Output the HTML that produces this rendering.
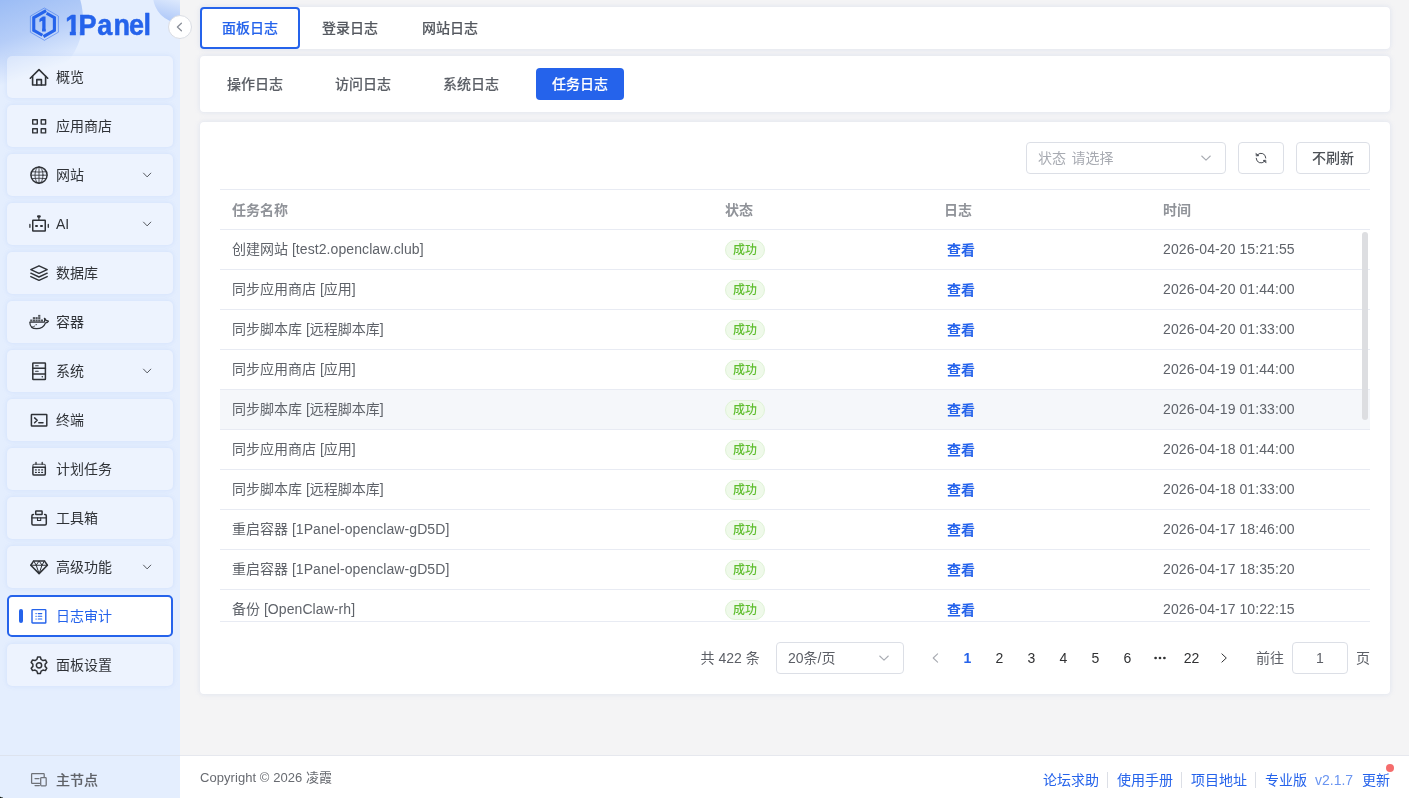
<!DOCTYPE html>
<html lang="zh-CN">
<head>
<meta charset="utf-8">
<title>1Panel</title>
<style>
*{box-sizing:border-box;margin:0;padding:0}
html,body{width:1409px;height:798px;overflow:hidden}
body{font-family:"Liberation Sans","Noto Sans CJK SC",sans-serif;font-size:14px;color:#606266;background:#f4f4f5;position:relative}
i{font-style:normal}
#wrap{position:absolute;left:0;top:0;width:1409px;height:798px;will-change:transform;transform:translateZ(0)}
/* sidebar */
#side{position:absolute;left:0;top:0;width:180px;height:798px;background:#e4eefe;overflow:hidden}
#side .blob1{position:absolute;left:-53px;top:-49px;width:136px;height:136px;border-radius:50%;background:linear-gradient(161deg,#6397ee 0%,#9bbcf5 36.7%,#b5cdf8 60%,#e4eefe 84%)}
#side .blob2{position:absolute;left:152.5px;top:-32.5px;width:55px;height:55px;border-radius:50%;background:linear-gradient(195deg,#e4eefe 52%,#a3c0f7 100%)}
.mi{position:absolute;left:7px;width:166px;height:42px;border-radius:5px;background:rgba(255,255,255,.33);color:#2f3237;font-size:14px;line-height:42px;box-shadow:0 0 4px rgba(190,210,250,.55)}
.mi .ic{position:absolute;left:22px;top:11px;width:20px;height:20px}
.mi .tx{position:absolute;left:49px;top:0;white-space:nowrap}
.mi .ar{position:absolute;left:134px;top:16px;width:12px;height:10px}
.mi.act{background:#fff;border:2px solid #2563eb;color:#2563eb;box-shadow:none}
.mi.act .ic{left:20px;top:9px}
.mi.act .tx{left:47px;top:-2px}
.mi.act .bar{position:absolute;left:10px;top:12px;width:4px;height:14px;border-radius:2px;background:#2563eb}
.sline{position:absolute;left:0;top:755px;width:180px;height:1px;background:#dde3ee}
.node{position:absolute;left:7px;top:759px;width:166px;height:42px;line-height:42px;color:#5f6268;font-weight:500;-webkit-text-stroke:.12px currentColor}
.node .ic{position:absolute;left:22px;top:11px;width:20px;height:20px}
.node .tx{position:absolute;left:49px;top:0;white-space:nowrap}
#collapse{position:absolute;left:168px;top:15px;width:24px;height:24px;border-radius:50%;background:#fff;border:1px solid #d9dce3}
/* cards */
.card{position:absolute;left:200px;width:1190px;background:#fff;border-radius:4px;box-shadow:0 0 5px rgba(185,198,228,.42)}
.tab1{position:absolute;top:0;height:42px;line-height:42px;font-size:14px;color:#54585f;white-space:nowrap;text-align:center;font-weight:500;-webkit-text-stroke:.13px currentColor}
.tab1.on{color:#2563eb;border:2px solid #2563eb;border-radius:4px;line-height:38px}
.tab2{position:absolute;top:12px;width:88px;height:32px;line-height:32px;font-size:14px;color:#5b5f66;font-weight:500;white-space:nowrap;text-align:center;border-radius:4px;-webkit-text-stroke:.13px currentColor}
.tab2.on{background:#2563eb;color:#fff}
.sel{position:absolute;height:32px;border:1px solid #dcdfe6;border-radius:4px;background:#fff;line-height:30px;padding-left:11px;font-size:14px;white-space:nowrap}
.sel .sc{position:absolute;right:12.8px;top:10px;width:12px;height:10px}
.btn{position:absolute;height:32px;border:1px solid #dcdfe6;border-radius:4px;background:#fff;line-height:30px;text-align:center;font-size:14px;font-weight:500;color:#4d5157;white-space:nowrap}
/* table */
.hl{position:absolute;left:220px;width:1150px;height:1px;background:#e8ebf3}
.th{position:absolute;top:200px;font-size:14px;line-height:20px;color:#909399;font-weight:bold;white-space:nowrap}
#tb{position:absolute;left:220px;top:230px;width:1150px;height:391px;overflow:hidden}
.rl{position:absolute;left:0;width:1150px;height:1px;background:#e8ebf3}
.hov{position:absolute;left:0;width:1150px;height:39px;background:#f5f7fa}
.td{position:absolute;font-size:14px;line-height:20px;color:#5f636a;white-space:nowrap}
.tag{position:absolute;left:505px;width:40px;height:20px;border-radius:10px;background:#eff9ea;border:1px solid #e0f3d7;color:#5fbe2e;font-size:12px;line-height:18px;text-align:center;font-weight:500}
.lk{position:absolute;left:727px;font-size:14px;line-height:20px;color:#2563eb;font-weight:bold;white-space:nowrap}
.thumb{position:absolute;left:1142px;top:2px;width:6px;height:188px;border-radius:3px;background:#dddee1}
.pt{position:absolute;top:648px;font-size:14px;line-height:20px;color:#5c5f66;white-space:nowrap}
.pg{position:absolute;top:648px;width:32px;text-align:center;font-size:14px;line-height:20px;color:#303133;white-space:nowrap}
.pg.on{color:#2563eb;font-weight:bold}
#foot{position:absolute;left:180px;top:755px;width:1229px;height:43px;background:#fff;border-top:1px solid #e6e8ee}
.cp{position:absolute;left:200px;top:769px;font-size:13px;line-height:18px;color:#686b71;white-space:nowrap;letter-spacing:.06px}
.ft{position:absolute;top:770px;font-size:14px;line-height:20px;color:#2563eb;white-space:nowrap}
.sep{position:absolute;top:772px;width:1px;height:16px;background:#dcdfe6}
.dot{position:absolute;left:1386px;top:764px;width:8px;height:8px;border-radius:50%;background:#f56c6c}
.cnr{position:absolute;bottom:0;width:6px;height:6px}
.cnr.l{left:-3px;background:radial-gradient(circle at 100% 0,transparent 5px,#0a140a 6px)}
.l{letter-spacing:.09px}
</style>
</head>
<body>
<div id="wrap">
<div id="side">
<div class="blob1"></div><div class="blob2"></div>
<svg class="logo" width="150" height="50" viewBox="0 0 150 50" style="position:absolute;left:0;top:0">
<path d="M44.4 8 L58.4 16.1 V32.2 L44.4 40.3 L30.4 32.2 V16.1 Z" fill="none" stroke="#2563eb" stroke-width="0.55" opacity=".85"/>
<path d="M46.1 10.6 L33.75 17.75 V30.25 L42.4 35.25" fill="none" stroke="#2563eb" stroke-width="3.1" stroke-linejoin="miter"/>
<path d="M46.6 13.25 L54.4 17.75 V30.25 L43.5 36.55" fill="none" stroke="#2563eb" stroke-width="3.1" stroke-linejoin="miter"/>
<defs><clipPath id="c0"><path d="M40 0 H70 V28 H53.8 V40 H49.5 V28 H40 Z"/></clipPath></defs>
<g transform="scale(0.85 1)"><text x="45.47" y="31" font-family="Liberation Sans, sans-serif" font-weight="bold" font-size="20.2" fill="#2563eb" stroke="#2563eb" stroke-width="0.9" stroke-linejoin="miter" clip-path="url(#c0)">1</text></g>
<defs><clipPath id="c1"><path d="M60 0 H200 V50 H88.7 V31 H84.3 V50 H77.6 V31 H60 Z"/></clipPath></defs>
<g transform="scale(0.9 1)"><text x="72.44 87.3 108 126.08 143.33 159.44" y="35" font-family="Liberation Sans, sans-serif" font-weight="bold" font-size="30" fill="#2563eb" stroke="#2563eb" stroke-width="0.55" stroke-linejoin="round" clip-path="url(#c1)">1Panel</text></g>
</svg>
<div class="mi" style="top:56px"><svg class="ic" viewBox="0 0 20 20" fill="none" stroke="#2f3237" stroke-width="1.6" stroke-linecap="round" stroke-linejoin="round" ><path d="M1.3 11.2 L10 2.6 L18.7 11.2"/><path d="M3.6 9.4 V18 H16.6 V9.4"/><path d="M7.8 18 V12.6 H12.4 V18"/></svg><span class="tx">概览</span></div>
<div class="mi" style="top:105px"><svg class="ic" viewBox="0 0 20 20" fill="none" stroke="#2f3237" stroke-width="1.4" stroke-linecap="round" stroke-linejoin="round" ><rect x="3.7" y="3.7" width="4.6" height="4.4"/><rect x="12.2" y="3.7" width="4.4" height="4.4"/><rect x="3.7" y="12.7" width="4.6" height="4.2"/><rect x="12.2" y="12.7" width="4.4" height="4.2"/></svg><span class="tx">应用商店</span></div>
<div class="mi" style="top:154px"><svg class="ic" viewBox="0 0 20 20" fill="none" stroke="#2f3237" stroke-width="0.85" stroke-linecap="round" stroke-linejoin="round" ><circle cx="10" cy="10.1" r="8.1" stroke-width="1.45"/><ellipse cx="10" cy="10.1" rx="4" ry="8.1"/><path d="M10 2 V18.2 M1.9 10.2 H18.1 M2.8 6.7 Q10 7.5 17.2 6.7 M2.8 13.6 Q10 12.8 17.2 13.6"/></svg><span class="tx">网站</span><svg class="ar" viewBox="0 0 12 10" fill="none" stroke="#4d5056" stroke-width="0.95" stroke-linecap="round" stroke-linejoin="round"><path d="M2.5 3.1 L6.15 6.9 L9.8 3.1"/></svg></div>
<div class="mi" style="top:203px"><svg class="ic" viewBox="0 0 20 20" fill="none" stroke="#2f3237" stroke-width="1.5" stroke-linecap="round" stroke-linejoin="round" ><rect x="3.75" y="6.35" width="12.5" height="10.7" rx="0.3"/><path d="M9.9 6.2 V3.4" stroke-width="1.2"/><rect x="8" y="1.2" width="3.8" height="2.5" rx="1.1" fill="#2f3237" stroke="none"/><path d="M0.9 10.5 V13.3 M19.3 10.5 V13.3" stroke-width="1.3"/><rect x="6.2" y="11" width="2.6" height="1.9" rx="0.3" fill="#2f3237" stroke="none"/><rect x="11.2" y="11" width="2.6" height="1.9" rx="0.3" fill="#2f3237" stroke="none"/></svg><span class="tx">AI</span><svg class="ar" viewBox="0 0 12 10" fill="none" stroke="#4d5056" stroke-width="0.95" stroke-linecap="round" stroke-linejoin="round"><path d="M2.5 3.1 L6.15 6.9 L9.8 3.1"/></svg></div>
<div class="mi" style="top:252px"><svg class="ic" viewBox="0 0 20 20" fill="none" stroke="#2f3237" stroke-width="1.4" stroke-linecap="round" stroke-linejoin="round" ><path d="M10 2.8 L18.2 6.6 L10 10.4 L1.8 6.6 Z"/><path d="M1.8 10.2 L10 14 L18.2 10.2"/><path d="M1.8 13.6 L10 17.4 L18.2 13.6"/></svg><span class="tx">数据库</span></div>
<div class="mi" style="top:301px"><svg class="ic" viewBox="0 0 20 20" fill="none" stroke="#2f3237" stroke-width="1.2" stroke-linecap="round" stroke-linejoin="round" ><path d="M0.8 10.2 H15.2 C15.7 9 15.9 7.7 15.4 6.4 C16.6 6.9 17 7.8 17.1 8.7 C18 8.5 18.9 8.6 19.5 9.1 C18.9 10.3 17.6 10.8 16.6 10.8 C15.2 14.4 12.4 16.7 7.6 16.7 C3.2 16.7 0.9 14 0.8 10.2 Z"/><g fill="#2f3237" stroke="none" opacity=".82"><rect x="1.20" y="7.5" width="2.2" height="2"/><rect x="3.85" y="7.5" width="2.2" height="2"/><rect x="6.50" y="7.5" width="2.2" height="2"/><rect x="9.15" y="7.5" width="2.2" height="2"/><rect x="11.80" y="7.5" width="2.2" height="2"/><rect x="3.85" y="5.1" width="2.2" height="2"/><rect x="6.50" y="5.1" width="2.2" height="2"/><rect x="9.15" y="5.1" width="2.2" height="2"/><rect x="9.15" y="2.9" width="2.2" height="1.9"/></g><circle cx="7.2" cy="12.6" r="0.7" fill="#2f3237" stroke="none"/><path d="M3 14.9 C4 15 5 14.6 5.8 14" stroke-width="0.9"/></svg><span class="tx">容器</span></div>
<div class="mi" style="top:350px"><svg class="ic" viewBox="0 0 20 20" fill="none" stroke="#2f3237" stroke-width="1.5" stroke-linecap="round" stroke-linejoin="round" ><rect x="3.8" y="1.9" width="12.6" height="16.6" rx="0.5"/><path d="M3.8 7.2 H16.4 M3.8 12.9 H16.4"/><path d="M6.6 4.7 H9.2 M6.6 10.2 H9.2" stroke-width="1.1"/><circle cx="13.3" cy="15.7" r="0.8" fill="#2f3237" stroke="none"/></svg><span class="tx">系统</span><svg class="ar" viewBox="0 0 12 10" fill="none" stroke="#4d5056" stroke-width="0.95" stroke-linecap="round" stroke-linejoin="round"><path d="M2.5 3.1 L6.15 6.9 L9.8 3.1"/></svg></div>
<div class="mi" style="top:399px"><svg class="ic" viewBox="0 0 20 20" fill="none" stroke="#2f3237" stroke-width="1.5" stroke-linecap="round" stroke-linejoin="round" ><rect x="2.4" y="4.5" width="15.4" height="11.6" rx="0.5"/><path d="M5.6 7.9 L8.2 10.3 L5.6 12.7"/><path d="M9.8 12.7 H14"/></svg><span class="tx">终端</span></div>
<div class="mi" style="top:448px"><svg class="ic" viewBox="0 0 20 20" fill="none" stroke="#2f3237" stroke-width="1.5" stroke-linecap="round" stroke-linejoin="round" ><path d="M3.9 8.3 V14.9 Q3.9 16.1 5.1 16.1 H15.1 Q16.3 16.1 16.3 14.9 V8.3 Z"/><path d="M3.9 8.3 V6.4 Q3.9 5.2 5.1 5.2 H15.1 Q16.3 5.2 16.3 6.4 V8.3" stroke-width="1.1" opacity=".85"/><path d="M7 3.5 V5.2 M13.2 3.5 V5.2" stroke-width="1.3"/><path d="M6.5 10.9 H7.3 M9.6 10.9 H10.4 M12.7 10.9 H13.5 M6.5 13.4 H7.3 M9.6 13.4 H10.4 M12.7 13.4 H13.5" stroke-width="1.25"/></svg><span class="tx">计划任务</span></div>
<div class="mi" style="top:497px"><svg class="ic" viewBox="0 0 20 20" fill="none" stroke="#2f3237" stroke-width="1.5" stroke-linecap="round" stroke-linejoin="round" ><path d="M4.5 6.6 H4.1 Q2.9 6.6 2.9 7.8 V15.7 Q2.9 16.9 4.1 16.9 H16.1 Q17.3 16.9 17.3 15.7 V7.8 Q17.3 6.6 16.1 6.6 H15.6"/><rect x="6.7" y="3.1" width="6.4" height="3.5" rx="0.5"/><path d="M2.9 9.8 H17.3" stroke-width="1.3"/><path d="M8.5 9.8 V12.5 H11.7 V9.8" stroke-width="1.1"/></svg><span class="tx">工具箱</span></div>
<div class="mi" style="top:546px"><svg class="ic" viewBox="0 0 20 20" fill="none" stroke="#2f3237" stroke-width="1.55" stroke-linecap="round" stroke-linejoin="round" ><path d="M4.7 3.9 H15.4 L18.4 8.2 L10.1 16.6 L1.8 8.2 Z"/><path d="M1.8 8.2 H18.4" stroke-width="1.1"/><path d="M4.7 3.9 L7.2 8.2 L10.1 16.6 L13 8.2 L15.4 3.9 M7.2 8.2 L10.1 3.9 L13 8.2" stroke-width="1.0"/></svg><span class="tx">高级功能</span><svg class="ar" viewBox="0 0 12 10" fill="none" stroke="#4d5056" stroke-width="0.95" stroke-linecap="round" stroke-linejoin="round"><path d="M2.5 3.1 L6.15 6.9 L9.8 3.1"/></svg></div>
<div class="mi act" style="top:595px"><i class="bar"></i><svg class="ic" viewBox="0 0 20 20" fill="none" stroke="#2563eb" stroke-width="1.4" stroke-linecap="round" stroke-linejoin="round" ><rect x="3" y="3.6" width="13.8" height="13.4" rx="0.6"/><path d="M9.2 7.6 H12.8 M9.2 10.3 H12.8 M9.2 13 H12.8" stroke-width="1.05"/><path d="M6.9 7.6 H7.3 M6.9 10.3 H7.3 M6.9 13 H7.3" stroke-width="1.1"/></svg><span class="tx">日志审计</span></div>
<div class="mi" style="top:644px"><svg class="ic" viewBox="0 0 20 20" fill="none" stroke="#2f3237" stroke-width="1.5" stroke-linecap="round" stroke-linejoin="round" ><path d="M7.88 4.47 L8.62 2.06 L11.38 2.06 L12.12 4.47 L13.99 5.55 L16.44 4.99 L17.82 7.38 L16.11 9.22 L16.11 11.38 L17.82 13.22 L16.44 15.61 L13.99 15.05 L12.12 16.13 L11.38 18.54 L8.62 18.54 L7.88 16.13 L6.01 15.05 L3.56 15.61 L2.18 13.22 L3.89 11.38 L3.89 9.22 L2.18 7.38 L3.56 4.99 L6.01 5.55 Z" stroke-linejoin="round"/><circle cx="10.0" cy="10.3" r="2.65"/></svg><span class="tx">面板设置</span></div>
<div class="sline"></div>
<div class="node"><svg class="ic" viewBox="0 0 20 20" fill="none" stroke="#6e7279" stroke-width="1.25" stroke-linecap="round" stroke-linejoin="round" ><path d="M10.6 13.4 H3.2 Q2.6 13.4 2.6 12.8 V4.3 Q2.6 3.7 3.2 3.7 H14.6 Q15.2 3.7 15.2 4.3 V7"/><path d="M6 8.6 H10 M6 15.6 H10.4" stroke-width="1.2"/><rect x="11.7" y="7.7" width="5.5" height="8.1" rx="0.8"/></svg><span class="tx">主节点</span></div>
</div>
<div id="collapse"><svg width="22" height="22" viewBox="0 0 22 22" fill="none" stroke="#8a8f99" stroke-width="1.3" stroke-linecap="round" stroke-linejoin="round"><path d="M12.4 7.2 L8.4 11 L12.4 14.8"/></svg></div>
<div class="card" style="top:7px;height:42px">
<div class="tab1 on" style="left:0;width:100px">面板日志</div><div class="tab1" style="left:100px;width:100px">登录日志</div><div class="tab1" style="left:200px;width:100px">网站日志</div>
</div>
<div class="card" style="top:56px;height:56px">
<div class="tab2" style="left:11px">操作日志</div><div class="tab2" style="left:119px">访问日志</div><div class="tab2" style="left:227px">系统日志</div><div class="tab2 on" style="left:336px">任务日志</div>
</div>
<div class="card" style="top:122px;height:572px"></div>
<div class="sel" style="left:1026px;top:142px;width:200px"><span style="color:#a8abb2">状态<span style="margin-left:5.5px">请选择</span></span><svg class="sc" viewBox="0 0 12 10" fill="none" stroke="#a8abb2" stroke-width="1.05" stroke-linecap="round" stroke-linejoin="round"><path d="M1.7 3 L6 7.2 L10.3 3"/></svg></div>
<div class="btn" style="left:1238px;top:142px;width:46px"><svg width="14" height="14" viewBox="0 0 14 14" fill="none" stroke="#3f434a" stroke-width="0.95" stroke-linecap="round" stroke-linejoin="round" style="position:absolute;left:15px;top:8px"><path d="M11.8 7 A4.8 4.8 0 0 0 3.6 3.7"/><path d="M2.2 7.3 A4.8 4.8 0 0 0 10.4 10.5"/><path d="M2.1 2.5 L5 4.7 L2.6 5.1 Z" fill="#3f434a" stroke-width="0.5"/><path d="M11.9 11.7 L9 9.5 L11.4 9.1 Z" fill="#3f434a" stroke-width="0.5"/></svg></div>
<div class="btn" style="left:1296px;top:142px;width:74px">不刷新</div>
<div class="hl" style="top:189px"></div>
<div class="th" style="left:232px">任务名称</div><div class="th" style="left:725px">状态</div><div class="th" style="left:944px">日志</div><div class="th" style="left:1163px">时间</div>
<div class="hl" style="top:229px"></div>
<div id="tb">
<div class="td" style="left:12px;top:9px">创建网站 [<span class="l">test2.openclaw.club</span>]</div><div class="tag" style="top:10px">成功</div><div class="lk" style="top:10px">查看</div><div class="td" style="left:943px;top:9px"><span class="l">2026-04-20 15:21:55</span></div><div class="rl" style="top:39px"></div>
<div class="td" style="left:12px;top:49px">同步应用商店 [应用]</div><div class="tag" style="top:50px">成功</div><div class="lk" style="top:50px">查看</div><div class="td" style="left:943px;top:49px"><span class="l">2026-04-20 01:44:00</span></div><div class="rl" style="top:79px"></div>
<div class="td" style="left:12px;top:89px">同步脚本库 [远程脚本库]</div><div class="tag" style="top:90px">成功</div><div class="lk" style="top:90px">查看</div><div class="td" style="left:943px;top:89px"><span class="l">2026-04-20 01:33:00</span></div><div class="rl" style="top:119px"></div>
<div class="td" style="left:12px;top:129px">同步应用商店 [应用]</div><div class="tag" style="top:130px">成功</div><div class="lk" style="top:130px">查看</div><div class="td" style="left:943px;top:129px"><span class="l">2026-04-19 01:44:00</span></div><div class="rl" style="top:159px"></div>
<div class="hov" style="top:160px"></div><div class="td" style="left:12px;top:169px">同步脚本库 [远程脚本库]</div><div class="tag" style="top:170px">成功</div><div class="lk" style="top:170px">查看</div><div class="td" style="left:943px;top:169px"><span class="l">2026-04-19 01:33:00</span></div><div class="rl" style="top:199px"></div>
<div class="td" style="left:12px;top:209px">同步应用商店 [应用]</div><div class="tag" style="top:210px">成功</div><div class="lk" style="top:210px">查看</div><div class="td" style="left:943px;top:209px"><span class="l">2026-04-18 01:44:00</span></div><div class="rl" style="top:239px"></div>
<div class="td" style="left:12px;top:249px">同步脚本库 [远程脚本库]</div><div class="tag" style="top:250px">成功</div><div class="lk" style="top:250px">查看</div><div class="td" style="left:943px;top:249px"><span class="l">2026-04-18 01:33:00</span></div><div class="rl" style="top:279px"></div>
<div class="td" style="left:12px;top:289px">重启容器 [<span class="l">1Panel-openclaw-gD5D</span>]</div><div class="tag" style="top:290px">成功</div><div class="lk" style="top:290px">查看</div><div class="td" style="left:943px;top:289px"><span class="l">2026-04-17 18:46:00</span></div><div class="rl" style="top:319px"></div>
<div class="td" style="left:12px;top:329px">重启容器 [<span class="l">1Panel-openclaw-gD5D</span>]</div><div class="tag" style="top:330px">成功</div><div class="lk" style="top:330px">查看</div><div class="td" style="left:943px;top:329px"><span class="l">2026-04-17 18:35:20</span></div><div class="rl" style="top:359px"></div>
<div class="td" style="left:12px;top:369px">备份 [<span class="l">OpenClaw-rh</span>]</div><div class="tag" style="top:370px">成功</div><div class="lk" style="top:370px">查看</div><div class="td" style="left:943px;top:369px"><span class="l">2026-04-17 10:22:15</span></div><div class="thumb"></div>
</div>
<div class="hl" style="top:621px"></div>
<div class="pt" style="left:700.5px">共 422 条</div>
<div class="sel" style="left:776px;top:642px;width:128px"><span style="color:#5c5f66">20条/页</span><svg class="sc" viewBox="0 0 12 10" fill="none" stroke="#a8abb2" stroke-width="1.05" stroke-linecap="round" stroke-linejoin="round"><path d="M1.7 3 L6 7.2 L10.3 3"/></svg></div>
<svg style="position:absolute;left:929px;top:652px" width="12" height="12" viewBox="0 0 12 12" fill="none" stroke="#a8abb2" stroke-width="1.1" stroke-linecap="round" stroke-linejoin="round"><path d="M8.6 1.9 L4.2 6 L8.6 10.1"/></svg>
<div class="pg on" style="left:951.5px">1</div><div class="pg" style="left:983.5px">2</div><div class="pg" style="left:1015.5px">3</div><div class="pg" style="left:1047.5px">4</div><div class="pg" style="left:1079.5px">5</div><div class="pg" style="left:1111.5px">6</div><div class="pg" style="left:1143.5px"><svg width="14" height="4" viewBox="0 0 14 4" style="position:absolute;left:9px;top:8px"><circle cx="2.6" cy="2" r="1.35" fill="#303133"/><circle cx="7" cy="2" r="1.35" fill="#303133"/><circle cx="11.4" cy="2" r="1.35" fill="#303133"/></svg>&nbsp;</div><div class="pg" style="left:1175.5px">22</div>
<svg style="position:absolute;left:1217px;top:652px" width="12" height="12" viewBox="0 0 12 12" fill="none" stroke="#303133" stroke-width="1.0" stroke-linecap="round" stroke-linejoin="round"><path d="M4.9 1.9 L9.3 6 L4.9 10.1"/></svg>
<div class="pt" style="left:1256px">前往</div><div class="sel" style="left:1292px;top:642px;width:56px;padding:0;text-align:center;color:#5c5f66">1</div><div class="pt" style="left:1356px">页</div>
<div id="foot"></div>
<div class="cp">Copyright © 2026 凌霞</div>
<div class="ft" style="left:1043px">论坛求助</div><div class="ft" style="left:1117px">使用手册</div><div class="ft" style="left:1191px">项目地址</div><div class="ft" style="left:1265px">专业版</div><div class="ft" style="left:1315px;color:#6a95f1">v2.1.7</div><div class="ft" style="left:1362px">更新</div><div class="dot"></div>
<div class="sep" style="left:1107px"></div><div class="sep" style="left:1181px"></div><div class="sep" style="left:1255px"></div>
<div class="cnr l"></div>
</div>
</body>
</html>
